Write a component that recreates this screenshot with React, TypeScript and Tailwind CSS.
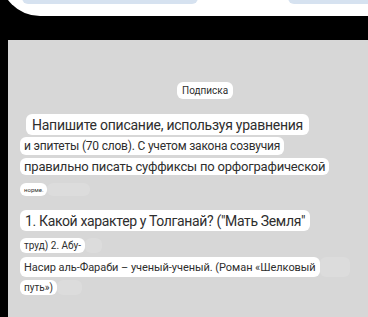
import React from "react";

const Bubble = ({
  children,
  className = "",
}: {
  children: React.ReactNode;
  className?: string;
}) => (
  <span className={`flex items-center bg-white rounded-[6px] text-[#2e2e2e] whitespace-nowrap leading-none ${className}`}>
    {children}
  </span>
);

const Ghost = ({ className = "" }: { className?: string }) => (
  <span className={`block bg-[#dcdcdc] rounded-[6px] ${className}`} />
);

export default function App() {
  return (
    <div
      className="w-[368px] h-[317px] bg-black overflow-hidden flex flex-col"
      style={{ fontFamily: "Roboto, 'Noto Sans', sans-serif" }}
    >
      <div className="h-[16px] overflow-hidden shrink-0">
        <div className="relative h-[40px] -mt-[24px] bg-white rounded-bl-[40px]">
          <div className="absolute left-[22px] top-[22px] w-[176px] h-[6px] bg-[#d6e2f0] rounded-b-[14px] blur-[0.5px]" />
          <div className="absolute left-[288px] top-[22px] w-[90px] h-[6px] bg-[#d6e2f0] rounded-bl-[14px] blur-[0.5px]" />
        </div>
      </div>
      <div className="h-[24px] shrink-0" />
      <div className="ml-[8px] flex-1 bg-[#d7d7d7] flex flex-col items-start pl-[12px]">
        <div className="mt-[42px] ml-[157px] flex">
          <Bubble className="h-[17px] px-[5px] text-[10px]">Подписка</Bubble>
        </div>
        <div className="mt-[15px] ml-[6px] flex">
          <Bubble className="h-[21px] px-[6px] text-[14px] tracking-[-0.25px]">
            Напишите описание, используя уравнения
          </Bubble>
        </div>
        <div className="mt-[2px] flex">
          <Bubble className="h-[18px] px-[4px] text-[12px] tracking-[-0.2px]">
            и эпитеты (70 слов). С учетом закона созвучия
          </Bubble>
        </div>
        <div className="mt-[3px] flex">
          <Bubble className="h-[17px] px-[4px] text-[13px] tracking-[-0.2px]">
            правильно писать суффиксы по орфографической
          </Bubble>
        </div>
        <div className="mt-[8px] flex">
          <Bubble className="h-[13px] px-[4px] text-[6px]">норме.</Bubble>
          <Ghost className="w-[43px] h-[13px]" />
        </div>
        <div className="mt-[14px] flex">
          <Bubble className="h-[21px] px-[5px] text-[14px] tracking-[-0.35px]">
            1. Какой характер у Толганай? ("Мать Земля"
          </Bubble>
        </div>
        <div className="mt-[7px] flex">
          <Bubble className="h-[15px] px-[4px] text-[10px]">труд) 2. Абу-</Bubble>
          <Ghost className="w-[17px] h-[15px]" />
        </div>
        <div className="mt-[4px] flex">
          <Bubble className="h-[20px] px-[4px] text-[11px] tracking-[-0.05px]">
            Насир аль-Фараби – ученый-ученый. (Роман «Шелковый
          </Bubble>
          <Ghost className="w-[30px] h-[20px]" />
        </div>
        <div className="mt-[3px] flex">
          <Bubble className="h-[15px] px-[4px] text-[10px]">путь»)</Bubble>
          <Ghost className="w-[25px] h-[15px]" />
        </div>
      </div>
    </div>
  );
}
